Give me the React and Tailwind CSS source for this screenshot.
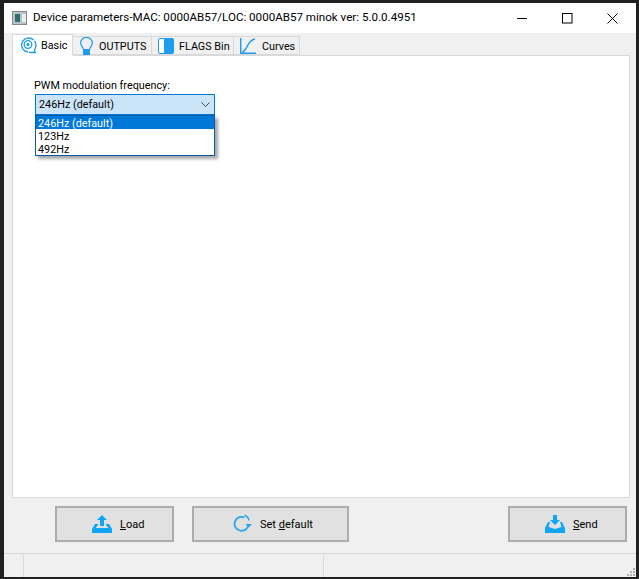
const font = { fontFamily: 'Roboto, "Open Sans", sans-serif' };

const BasicIcon = () => (
  <svg width="17" height="17" viewBox="0 0 17 17" fill="none">
    <path d="M13.500 3A7 7 0 1 0 8 15" stroke="#1e9cf0" strokeWidth="1.300" />
    <circle cx="8" cy="7.500" r="3.800" stroke="#1e9cf0" strokeWidth="1.300" />
    <circle cx="8" cy="7.500" r="1.600" fill="#1e9cf0" />
    <path d="M9 15.500h7M14.500 4c1.200 1.500 1.500 3 1.500 5l-2 6" stroke="#1e9cf0" strokeWidth="1.300" />
  </svg>
);

const BulbIcon = () => (
  <svg width="13" height="18" viewBox="0 0 13 18" fill="none">
    <path d="M3.500 12.500C3 10 0.700 9 0.700 6A5.800 5.600 0 0 1 12.300 6C12.300 9 10 10 9.500 12.500Z" stroke="#1e9cf0" strokeWidth="1.200" />
    <rect x="3" y="13" width="7" height="5" fill="#1e9cf0" />
  </svg>
);

const FlagsIcon = () => (
  <svg width="16" height="16" viewBox="0 0 16 16" fill="none">
    <rect x="0.500" y="0.500" width="15" height="15" rx="1.500" fill="#fff" stroke="#1e9cf0" />
    <path d="M6 0.500h8a1.500 1.500 0 0 1 1.500 1.500v12a1.500 1.500 0 0 1-1.500 1.500H6Z" fill="#1e9cf0" />
  </svg>
);

const CurveIcon = () => (
  <svg width="16" height="16" viewBox="0 0 16 16" fill="none">
    <path d="M0.700 0v15.300H16" stroke="#1e9cf0" strokeWidth="1.400" />
    <path d="M2 14C7 14 7 2 15 1" stroke="#1e9cf0" strokeWidth="1.400" />
  </svg>
);

const UploadIcon = () => (
  <svg width="20" height="18" viewBox="0 0 20 18">
    <path d="M10 0l5 5h-3v6H8V5H5Z" fill="#0ea5f5" />
    <path d="M3 9h3v1L3.500 13h13L14 10V9h3l3 5v4H0v-4Z" fill="#0ea5f5" />
  </svg>
);

const DownloadIcon = () => (
  <svg width="20" height="18" viewBox="0 0 20 18">
    <path d="M8 0h4v5h3l-5 5-5-5h3Z" fill="#0ea5f5" />
    <path d="M3 7h2l-1.500 5 6.500 2 6.500-2L15 7h2l3 6v5H0v-5Z" fill="#0ea5f5" />
  </svg>
);

const RefreshIcon = () => (
  <svg width="20" height="20" viewBox="0 0 20 20" fill="none">
    <path d="M16.500 10A7 7 0 1 1 12.500 3.500" stroke="#22a7ee" strokeWidth="1.800" />
    <path d="M12.500 1.500c3 .5 4 2.500 4.500 5" stroke="#22a7ee" strokeWidth="1.300" />
    <path d="M13.500 10h6.500l-3.300 3.500Z" fill="#22a7ee" />
  </svg>
);

const Tab = ({ icon, label, active, className }) => (
  <div
    className={`flex items-center border border-[#d9d9d9] ${
      active
        ? 'relative z-10 -mb-px h-[22px] border-b-white bg-white'
        : 'mt-[2px] h-[19px] border-l-0 bg-[#f0f0f0]'
    } ${className}`}
  >
    <span className="shrink-0">{icon}</span>
    <span className={`whitespace-nowrap text-[10.800px] text-black ${active ? 'pt-[2px]' : 'pt-[4px]'}`}>{label}</span>
  </div>
);

const Button = ({ icon, pre, ul, post, className }) => (
  <button className={`flex h-[36px] items-center gap-[8px] border-2 border-[#adadad] bg-[#e1e1e1] text-[11px] text-black ${className}`}>
    {icon}
    <span className="pt-[3px]">
      {pre}
      <span className="underline">{ul}</span>
      {post}
    </span>
  </button>
);

export default function App() {
  return (
    <div className="flex h-[579px] w-[639px] overflow-hidden bg-[#202020] pb-[2px] pl-[4px] pr-[3px] pt-[3px]" style={font}>
      <div className="flex min-w-0 flex-1 flex-col bg-[#f0f0f0]">
        {/* title bar */}
        <div className="flex h-[30px] shrink-0 items-center bg-white pl-[8px]">
          <div className="mr-[6px] flex h-[14px] w-[15px] border border-[#888] bg-[#b9c4c4]">
            <div className="m-[2px] w-[5px] bg-[#2f6f6f]" />
            <div className="my-[2px] w-[4px] bg-[#e8eeee]" />
          </div>
          <span className="flex-1 whitespace-nowrap text-[11.600px] text-black">
            Device parameters-MAC: 0000AB57/LOC: 0000AB57 minok ver: 5.0.0.4951
          </span>
          <div className="flex items-center gap-[34px] pr-[18px]">
            <svg width="11" height="11" viewBox="0 0 11 11"><path d="M0 5.500h10" stroke="#000" /></svg>
            <svg width="11" height="11" viewBox="0 0 11 11" fill="none"><rect x="0.500" y="0.500" width="9.500" height="9.500" stroke="#000" /></svg>
            <svg width="11" height="11" viewBox="0 0 11 11" fill="none"><path d="M0.500 0.500l10 10M10.500 0.500l-10 10" stroke="#000" /></svg>
          </div>
        </div>

        {/* tabs and panel */}
        <div className="flex min-h-0 flex-1 flex-col pl-[8px] pr-[6px] pt-[1px]">
          <div className="flex h-[21px] shrink-0 items-start">
            <Tab active icon={<BasicIcon />} label="Basic" className="w-[61px] gap-[4px] pl-[7px]" />
            <Tab icon={<BulbIcon />} label="OUTPUTS" className="w-[79px] gap-[6px] pl-[7px]" />
            <Tab icon={<FlagsIcon />} label="FLAGS Bin" className="w-[82px] gap-[5px] pl-[6px]" />
            <Tab icon={<CurveIcon />} label="Curves" className="w-[66px] gap-[6px] pl-[6px]" />
          </div>
          <div className="relative h-[443px] shrink-0 border border-[#d9d9d9] bg-white pl-[22px] pt-[21px]">
            <div className="-ml-px h-[17px] text-[10.800px] leading-[17px] text-black">PWM modulation frequency:</div>
            <div className="flex h-[21px] w-[180px] items-center justify-between border border-[#0078d7] bg-[#cce4f7] pl-[3px] pr-[4px] text-[10.800px] text-black">
              <span className="pt-[2px]">246Hz (default)</span>
              <svg width="9" height="5" viewBox="0 0 9 5" fill="none"><path d="M0.500 0.500l4 4 4-4" stroke="#444" /></svg>
            </div>
            <div className="absolute left-[22px] top-[59px] w-[180px] border border-[#0a5aa8] bg-white text-[10.800px] text-black shadow-[3px_3px_3px_rgba(0,0,0,0.35)]">
              <div className="h-[13px] bg-[#0078d7] pl-[2px] pt-[1px] leading-[13px] text-white">246Hz (default)</div>
              <div className="h-[13px] pl-[2px] pt-[1px] leading-[13px]">123Hz</div>
              <div className="h-[13px] pl-[2px] pt-[1px] leading-[13px]">492Hz</div>
            </div>
          </div>
        </div>

        {/* buttons */}
        <div className="flex h-[56px] shrink-0 items-start pl-[51px] pt-[9px]">
          <Button icon={<UploadIcon />} pre="" ul="L" post="oad" className="w-[119px] pl-[35px]" />
          <Button icon={<RefreshIcon />} pre="Set " ul="d" post="efault" className="ml-[18px] w-[157px] pl-[38px]" />
          <Button icon={<DownloadIcon />} pre="" ul="S" post="end" className="ml-[159px] w-[119px] pl-[35px]" />
        </div>

        {/* status bar */}
        <div className="relative flex h-[24px] shrink-0 border-t border-[#d9d9d9] pt-[1px]">
          <div className="w-[20px] border-r border-[#d9d9d9]" />
          <div className="w-[300px] border-r border-[#d9d9d9]" />
          <div className="absolute bottom-[1px] right-[1px] grid grid-cols-3 gap-[1px]">
            {[0, 1, 2, 3, 4, 5, 6, 7, 8].map((i) => (
              <div key={i} className={`h-[2px] w-[2px] ${[0, 1, 3].includes(i) ? 'bg-transparent' : 'bg-[#b0b0b0]'}`} />
            ))}
          </div>
        </div>
      </div>
    </div>
  );
}
